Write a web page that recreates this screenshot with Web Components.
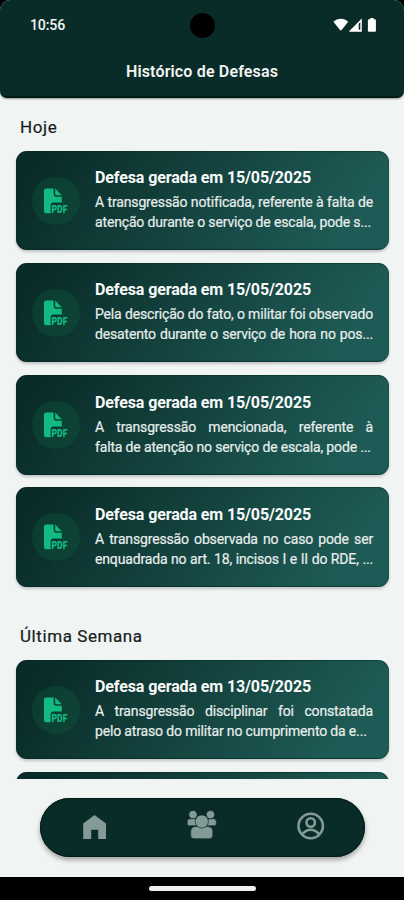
<!DOCTYPE html>
<html lang="pt-BR">
<head>
<meta charset="utf-8">
<title>Histórico de Defesas</title>
<style>
html,body{margin:0;background:#000}
body{font-family:Roboto,"Noto Sans",sans-serif}
</style>
</head>
<body>
<defense-screen></defense-screen>
<script>
const define = (name, html) => customElements.define(name, class extends HTMLElement {
  constructor() {
    super();
    this.attachShadow({mode: 'open'}).innerHTML = html;
  }
});

define('status-bar', `
<style>
:host{display:grid;grid-template-columns:1fr 25px 1fr;align-items:center;height:50px;color:#f0f3f2;font-size:14.2px;font-weight:500;letter-spacing:-.2px}
.time{padding-left:30px}
.camera{width:25px;height:25px;border-radius:50%;background:#000}
.icons{justify-self:end;padding-right:25px;display:flex}
svg{display:block}
</style>
<span class="time">10:56</span>
<span class="camera"></span>
<span class="icons"><svg width="46" height="16" viewBox="0 0 46 16" fill="#fff">
<path d="M.4 4.7C4.6.6 11 .6 15.2 4.7L8.6 13q-.8.8-1.6 0Z"/>
<path fill-rule="evenodd" d="M28.8 1.4V14.8H16.4Q15.9 14.3 16.8 13.4ZM27.3 5.2 25.7 6.8V12.8H27.3Z"/>
<path d="M37.2 1h3.4v1.3h1.3q1 0 1 1v10.5q0 1-1 1h-6q-1 0-1-1V3.3q0-1 1-1h1.3Z"/>
</svg></span>`);

define('app-header', `
<style>
:host{display:block;box-sizing:border-box;height:98px;background:#0a2c29;border-radius:10px 10px 7px 7px;border-bottom:2px solid #031d1a;box-shadow:0 1px 2px #0006;position:relative;z-index:1}
h1{margin:0;padding-top:10px;text-align:center;font-size:16px;line-height:24px;font-weight:600;letter-spacing:.16px;color:#f1f4f3}
</style>
<status-bar></status-bar><h1><slot></slot></h1>`);

define('pdf-badge', `
<style>
:host{display:block;width:48px;height:48px;border-radius:50%;background:#0d7b4c33}
svg{display:block}
text{font:900 11px Roboto,sans-serif}
</style>
<svg width="48" height="48" viewBox="0 0 48 48" fill="#12ba81">
<path d="M14 11.6H21.6V17Q21.6 19.7 24.3 19.7H29.8V25.5H21.2Q18.6 25.5 18.6 28V36.2H14Q12 36.2 12 34.2V13.6Q12 11.6 14 11.6Z"/>
<path d="M23.2 11.6 29.8 18.3H24.5Q23.2 18.3 23.2 17Z"/>
<text x="19.4" y="36" textLength="16" lengthAdjust="spacingAndGlyphs">PDF</text>
</svg>`);

define('defense-card', `
<style>
:host{display:flex;box-sizing:border-box;height:99.5px;flex:none;padding:0 16px;border-radius:11px;
background:linear-gradient(125deg,#092c28 8%,#123f3b 40%,#1f5b56 88%);
box-shadow:inset 0 -1px 1px #04282499,inset 0 1px 1px #04282480,0 2px 3px #0003}
:host([collapsed])>*{display:none}
pdf-badge{margin-top:26px;flex:none}
.copy{margin-left:15px;width:278px;padding-top:16.5px}
h3{margin:0;font-size:16px;line-height:21px;font-weight:700;letter-spacing:-.12px;color:#f8faf9;white-space:nowrap}
.body{padding-top:4px;font-size:14px;line-height:20px;color:#e7eeec;-webkit-text-stroke:.2px #e7eeec;letter-spacing:-.155px}
</style>
<pdf-badge></pdf-badge>
<div class="copy"><h3><slot name="title"></slot></h3><div class="body"><slot></slot></div></div>`);

define('history-section', `
<style>
:host{display:block}
h2{margin:0 0 0 20px;font-size:17px;line-height:24px;font-weight:400;color:#17201f;-webkit-text-stroke:.2px #17201f;letter-spacing:.58px}
.cards{display:flex;flex-direction:column;gap:12.8px;margin:11.5px 15px 0 16px}
</style>
<h2><slot name="heading"></slot></h2><div class="cards"><slot></slot></div>`);

define('bottom-nav', `
<style>
:host{box-sizing:border-box;display:flex;justify-content:space-between;width:325px;height:59px;padding:13px 40px 0 40px;border-radius:30px;background:#0a2c29;box-shadow:inset 0 0 1px 1px #021c19,0 3px 5px #0005}
svg{display:block;width:30px;height:30px}
</style>
<svg viewBox="0 0 30 30" fill="#839a97"><path d="M14.5 4 26 12.6V28H18.2V18.8H11.2V28H3.2V12.6Z"/></svg>
<svg viewBox="0 0 30 30" fill="#839a97" stroke="#0a2c29" stroke-width=".7" overflow="visible">
<circle cx="6" cy="3.6" r="4.2"/><circle cx="23.5" cy="3.6" r="4.2"/>
<path d="M2.8 7.7H8.7L11 14.8H2Q.2 14.8.2 12.9V10.3Q.2 7.7 2.8 7.7ZM21 7.7H26.7Q29.3 7.7 29.3 10.3V12.9Q29.3 14.8 27.5 14.8H19Z"/>
<path d="M9 15.5H20.5Q25.8 15.5 25.8 20.5V24.5Q25.8 27.8 22.5 27.8H7Q3.7 27.8 3.7 24.5V20.5Q3.7 15.5 9 15.5Z"/>
<circle cx="14.8" cy="10.5" r="6.6"/></svg>
<svg viewBox="0 0 30 30" fill="none" stroke="#839a97" stroke-width="2.6">
<circle cx="15.7" cy="15" r="12.2"/><circle cx="15.7" cy="11.5" r="4.2"/>
<path d="M7.3 23.2Q11 18.8 15.7 18.8T24.1 23.2"/></svg>`);

define('defense-screen', `
<style>
:host{display:flex;flex-direction:column;height:900px;width:404px;overflow:hidden;background:#000}
.page{height:877px;background:#f0f4f3;border-radius:10px 10px 0 0;display:flex;flex-direction:column;align-items:center}
app-header{width:404px;flex:none}
main{height:680.5px;width:404px;box-sizing:border-box;padding-top:17px;overflow:hidden;flex:none;display:flex;flex-direction:column;gap:37.3px}
history-section{flex:none}
bottom-nav{margin-top:19.5px;flex:none}
.gesture{flex:1;display:flex;justify-content:center;align-items:center}
.gesture i{width:107px;height:5px;border-radius:3px;background:#f3eef2}
.line{display:block;white-space:nowrap;text-align:justify;text-align-last:justify}
.line.end{text-align-last:start}
</style>
<div class="page">
<app-header>Histórico de Defesas</app-header>
<main>
<history-section><span slot="heading">Hoje</span>
<defense-card><span slot="title">Defesa gerada em 15/05/2025</span><span class="line">A transgressão notificada, referente à falta de</span><span class="line end">atenção durante o serviço de escala, pode s...</span></defense-card>
<defense-card><span slot="title">Defesa gerada em 15/05/2025</span><span class="line">Pela descrição do fato, o militar foi observado</span><span class="line">desatento durante o serviço de hora no pos...</span></defense-card>
<defense-card><span slot="title">Defesa gerada em 15/05/2025</span><span class="line">A transgressão mencionada, referente à</span><span class="line end">falta de atenção no serviço de escala, pode ...</span></defense-card>
<defense-card><span slot="title">Defesa gerada em 15/05/2025</span><span class="line">A transgressão observada no caso pode ser</span><span class="line">enquadrada no art. 18, incisos I e II do RDE, ...</span></defense-card>
</history-section>
<history-section><span slot="heading">Última Semana</span>
<defense-card><span slot="title">Defesa gerada em 13/05/2025</span><span class="line">A transgressão disciplinar foi constatada</span><span class="line end">pelo atraso do militar no cumprimento da e...</span></defense-card>
<defense-card collapsed></defense-card>
</history-section>
</main>
<bottom-nav></bottom-nav>
</div>
<div class="gesture"><i></i></div>`);
</script>
</body>
</html>
